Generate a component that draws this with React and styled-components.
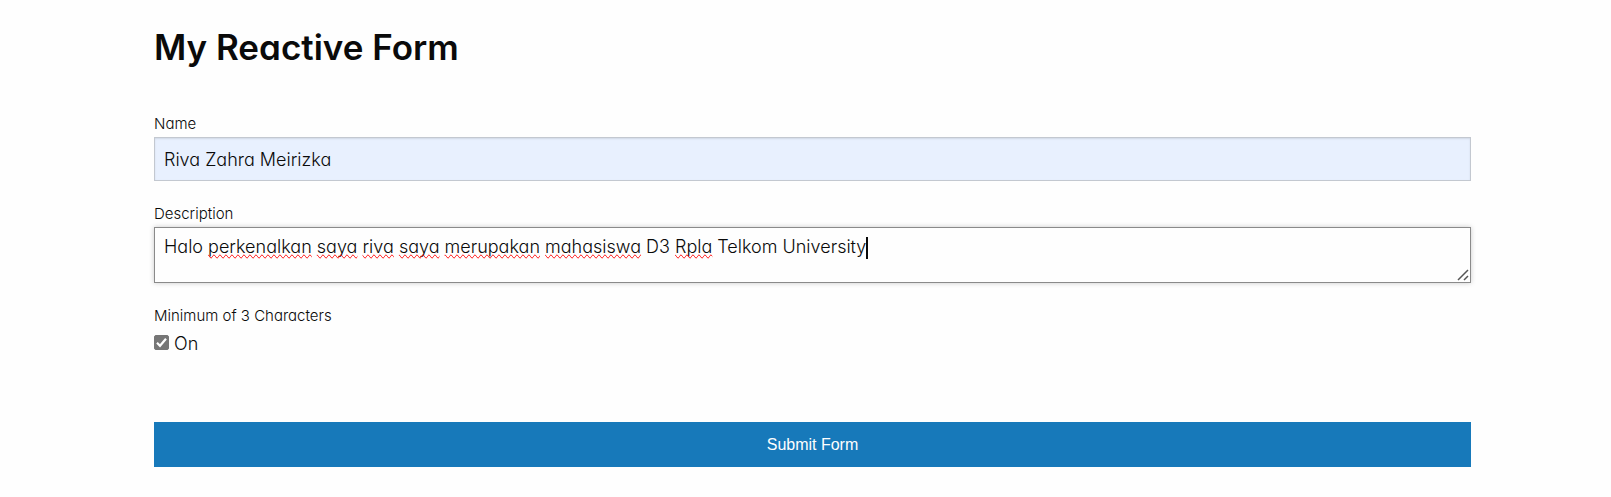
import React, { useState } from "react";
import styled, { createGlobalStyle } from "styled-components";

const GlobalStyle = createGlobalStyle`
  *, *::before, *::after { box-sizing: border-box; }
  body {
    margin: 0;
    background: #fefefe;
    color: #0a0a0a;
    font-family: Inter, Lato, sans-serif;
    font-feature-settings: "cv11";
    font-weight: 300;
    font-size: 18px;
    line-height: 24px;
  }
`;

const Form = styled.form`
  display: flex;
  flex-direction: column;
  padding: 23px 140px 30px 154px;
`;

const Title = styled.h1`
  margin: 0 0 40px;
  font-size: 35px;
  font-weight: 600;
  line-height: 48px;
`;

const Field = styled.div`
  display: flex;
  flex-direction: column;
  margin-bottom: 20px;
`;

const Label = styled.label`
  font-size: 15px;
  line-height: 26px;
`;

const Group = styled.fieldset`
  margin: 0 0 63px;
  padding: 0;
  border: 0;
`;

const Legend = styled.legend`
  padding: 0;
  font-size: 15px;
  line-height: 26px;
`;

const TextInput = styled.input`
  width: 100%;
  height: 44px;
  padding: 8px 9px;
  border: 1px solid #c3c8d0;
  border-radius: 0;
  background: #e8f0fe;
  box-shadow: inset 0 1px 2px rgba(10, 10, 10, 0.1);
  color: inherit;
  font: inherit;
  font-feature-settings: inherit;
  outline: none;
`;

const Editor = styled.div`
  position: relative;
  display: flex;
`;

const TextArea = styled.textarea`
  width: 100%;
  height: 56px;
  padding: 7px 9px;
  border: 1px solid #8a8a8a;
  border-radius: 0;
  background: #fefefe;
  box-shadow: 0 0 5px #cacaca;
  color: inherit;
  font: inherit;
  font-feature-settings: inherit;
  outline: none;
  resize: vertical;

  &::-webkit-resizer { background: transparent; }
`;

const Marks = styled.div`
  position: absolute;
  inset: 0;
  padding: 8px 10px;
  overflow: hidden;
  color: transparent;
  white-space: pre-wrap;
  pointer-events: none;
`;

const Misspelt = styled.span`
  text-decoration: spelling-error;
`;

const Caret = styled.span`
  display: inline-block;
  width: 2px;
  height: 22px;
  margin-right: -2px;
  background: #0a0a0a;
  vertical-align: middle;
`;

const Grip = styled.svg`
  position: absolute;
  right: 2px;
  bottom: 2px;
  width: 12px;
  height: 12px;
  pointer-events: none;
`;

const Option = styled.label`
  display: flex;
  align-items: center;
  gap: 5px;
  line-height: 30px;
`;

const Checkbox = styled.input`
  appearance: none;
  width: 15px;
  height: 15px;
  margin: 0;
  border: 1px solid #767676;
  border-radius: 2px;
  background: #fefefe;

  &:checked { background: #767676; }
`;

const CheckboxWrap = styled.span`
  display: grid;
  margin-bottom: 3px;
  > * { grid-area: 1 / 1; }
`;

const Tick = styled.svg`
  width: 15px;
  height: 15px;
  pointer-events: none;
`;

const Submit = styled.button`
  height: 45px;
  border: 0;
  background: #1779ba;
  color: #fefefe;
  font-family: "Liberation Sans", Arial, sans-serif;
  font-size: 16px;
  line-height: 16px;
  cursor: pointer;
`;

const UNKNOWN = new Set(["perkenalkan", "saya", "riva", "merupakan", "mahasiswa", "Rpla"]);

export default function App() {
  const [name, setName] = useState("Riva Zahra Meirizka");
  const [description, setDescription] = useState(
    "Halo perkenalkan saya riva saya merupakan mahasiswa D3 Rpla Telkom University"
  );
  const [on, setOn] = useState(true);

  return (
    <>
      <GlobalStyle />
      <Form onSubmit={(e) => e.preventDefault()}>
        <Title>My Reactive Form</Title>
        <Field>
          <Label htmlFor="name">Name</Label>
          <TextInput id="name" value={name} onChange={(e) => setName(e.target.value)} />
        </Field>
        <Field>
          <Label htmlFor="description">Description</Label>
          <Editor>
            <TextArea
              id="description"
              spellCheck={false}
              value={description}
              onChange={(e) => setDescription(e.target.value)}
            />
            <Marks aria-hidden="true">
              {description.split(/(\s+)/).map((word, i) =>
                UNKNOWN.has(word) ? <Misspelt key={i}>{word}</Misspelt> : word
              )}
              <Caret />
            </Marks>
            <Grip viewBox="0 0 12 12" aria-hidden="true">
              <path d="M1 11 11 1M7 11l4-4" fill="none" stroke="#555" strokeWidth="1.5" />
            </Grip>
          </Editor>
        </Field>
        <Group>
          <Legend>Minimum of 3 Characters</Legend>
          <Option>
            <CheckboxWrap>
              <Checkbox type="checkbox" checked={on} onChange={(e) => setOn(e.target.checked)} />
              {on && (
                <Tick viewBox="0 0 15 15" aria-hidden="true">
                  <path d="M3 7.8 6 10.8 12 3.8" fill="none" stroke="#fefefe" strokeWidth="2.2" />
                </Tick>
              )}
            </CheckboxWrap>
            On
          </Option>
        </Group>
        <Submit type="submit">Submit Form</Submit>
      </Form>
    </>
  );
}
